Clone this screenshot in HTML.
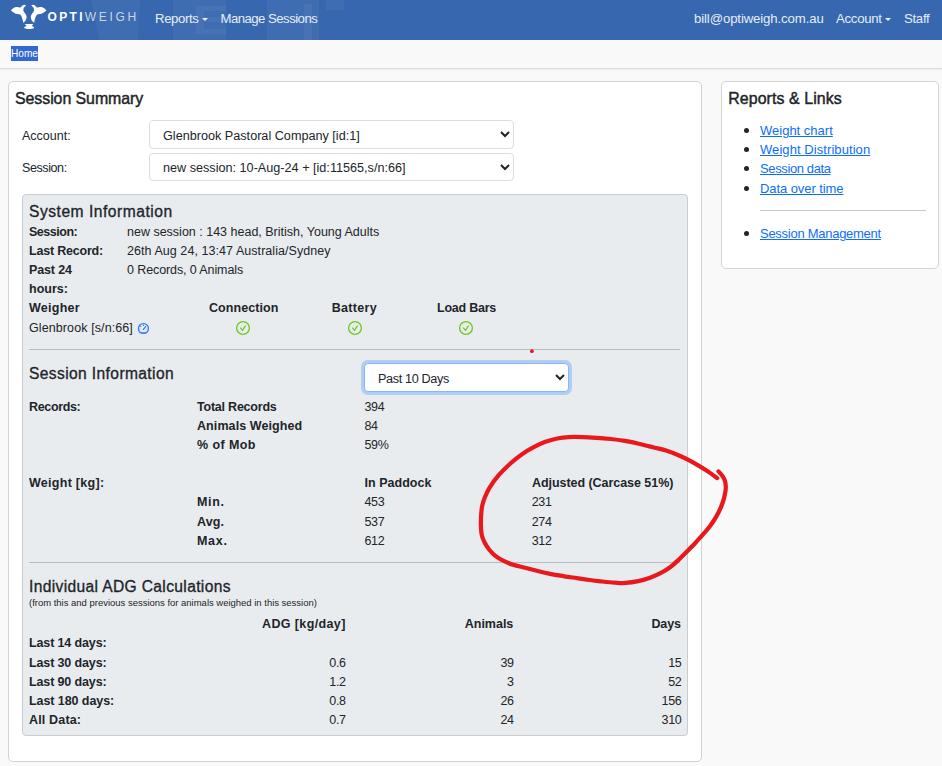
<!DOCTYPE html>
<html lang="en">
<head>
<meta charset="utf-8">
<title>Optiweigh - Session Summary</title>
<style>
*{box-sizing:border-box;}
html,body{margin:0;padding:0;}
body{width:942px;height:766px;overflow:hidden;background:#f9f9f9;font-family:"Liberation Sans",sans-serif;font-size:12.5px;line-height:19.2px;color:#212529;position:relative;}
b,.b{font-weight:bold;letter-spacing:-0.3px;}
a{color:#0d6efd;text-decoration:underline;}
/* navbar */
.nav{position:absolute;left:0;top:0;width:942px;height:40px;background:#3767ae;color:#e6edf6;font-size:13.200px;}
.nav .it{position:absolute;top:0;line-height:37px;white-space:nowrap;letter-spacing:-0.37px;}
.caret{display:inline-block;width:0;height:0;border-left:3px solid transparent;border-right:3px solid transparent;border-top:3px solid #e9eff7;vertical-align:middle;margin-left:3px;position:relative;top:0px;}
.logo{position:absolute;left:0;top:0;}
/* crumb */
.crumb{position:absolute;left:0;top:40px;width:942px;height:29px;background:#f9f9f9;border-bottom:1px solid #dcdddf;box-shadow:0 1px 2px rgba(0,0,0,.06);}
.crumb .sel{position:absolute;left:11px;top:6px;height:15px;line-height:15px;background:#3367d1;color:#fff;font-size:10.1px;padding:0;}
/* cards */
.card{position:absolute;background:#fff;border:1px solid #d3d3d3;border-radius:5px;}
.left{left:8px;top:81px;width:694px;height:681px;}
.right{left:721px;top:81px;width:218px;height:188px;}
h5{margin:0;font-size:15.900px;font-weight:normal;-webkit-text-stroke:0.450px #212529;letter-spacing:-0.050px;line-height:20px;position:absolute;white-space:nowrap;color:#212529;}
.lbl{position:absolute;white-space:nowrap;}
.sel-box{position:absolute;height:29px;border:1px solid #dadee3;border-radius:4px;background:#fff;padding-left:13px;line-height:27px;padding-top:1.500px;font-size:12.650px;white-space:nowrap;}
.sel-box svg{position:absolute;right:2px;top:7px;}
.panel{position:absolute;left:13px;top:112px;width:666px;height:542px;background:#e9ecef;border:1px solid #c9ccd0;border-radius:4px;}
.panel h6{margin:0;font-size:15.600px;-webkit-text-stroke:0.320px #212529;letter-spacing:0.520px;font-weight:normal;line-height:19px;position:absolute;left:6px;white-space:nowrap;color:#212529;}
.t{position:absolute;white-space:nowrap;line-height:19px;margin-top:0.700px;}
.r{text-align:right;}
.n{letter-spacing:-0.35px;}
.n.r{margin-right:-0.35px;}
.hr{position:absolute;left:6px;width:651px;height:1px;background:#b9bcc0;}
.ico{position:absolute;}
ul{margin:0;padding:0;list-style:none;}
.right li{position:absolute;left:38px;white-space:nowrap;line-height:19px;font-size:13px;}
.right li:before{content:"";position:absolute;left:-16px;top:7px;width:5px;height:5px;border-radius:50%;background:#212529;}
.anno{position:absolute;left:0;top:0;pointer-events:none;}
</style>
</head>
<body>
<div class="nav">
  <svg style="position:absolute;left:0;top:0" width="942" height="40" viewBox="0 0 942 40"><g fill="#fff" fill-opacity="0.045"><path d="M91 0 H140 L138 40 H99 Z"/><rect x="173" y="0" width="53" height="40"/><path d="M196 6 H226 V11 H204 V17 H226 V22 H204 V29 H226 V34 H196 Z"/><rect x="267" y="0" width="52" height="40"/><rect x="326" y="0" width="18" height="10"/><rect x="304" y="4" width="8" height="36"/></g></svg>
  <svg class="logo" width="150" height="40" viewBox="0 0 150 40">
    <g fill="#fff">
      <path d="M11 10.200 C12.500 8.300 14.500 7.100 16.500 7 C18.300 6.900 19.600 7.900 20.500 7.500 C21.300 6.200 22.400 5.200 23.700 4.900 C24.800 4.700 25.800 5 26.100 5.600 C24.800 6.400 23.900 7.500 23.500 8.800 C23.100 10 23.400 11.200 24.200 12.200 C25.100 13.300 26 14.300 26.400 15.800 C26.800 17.300 26.500 19 25.600 20.400 C25 21.300 24.200 22.100 23.200 22.700 C23.100 21.400 22.800 20.200 22.400 19 C22 17.800 21.900 16.700 21.200 15.700 C20.700 15 20.200 14.500 19.400 14.300 C18.200 14 17 14.100 15.800 13.700 C14.600 13.300 13.500 12.600 12.500 11.800 C11.900 11.300 11.400 10.800 11 10.200 Z"/>
      <path d="M11 10.200 C12.500 8.300 14.500 7.100 16.500 7 C18.300 6.900 19.600 7.900 20.500 7.500 C21.300 6.200 22.400 5.200 23.700 4.900 C24.800 4.700 25.800 5 26.100 5.600 C24.800 6.400 23.900 7.500 23.500 8.800 C23.100 10 23.400 11.200 24.200 12.200 C25.100 13.300 26 14.300 26.400 15.800 C26.800 17.300 26.500 19 25.600 20.400 C25 21.300 24.200 22.100 23.200 22.700 C23.100 21.400 22.800 20.200 22.400 19 C22 17.800 21.900 16.700 21.200 15.700 C20.700 15 20.200 14.500 19.400 14.300 C18.200 14 17 14.100 15.800 13.700 C14.600 13.300 13.500 12.600 12.500 11.800 C11.900 11.300 11.400 10.800 11 10.200 Z" transform="translate(57.400,0) scale(-1,1)"/>
      <path d="M24.700 24 H33.400 C32.900 24.800 32.300 25.300 31.600 25.800 C32.500 26.300 33.600 26.900 34.300 27.700 C33.200 28.700 31 29.100 29.100 29.100 C27.200 29.100 25.200 28.700 24 27.700 C24.700 26.900 25.800 26.300 26.700 25.800 C26 25.300 25.300 24.800 24.700 24 Z"/>
    </g>
    <text y="21.100" font-family="Liberation Sans, sans-serif" font-size="12" fill="#fff"><tspan x="47.600" font-weight="bold" letter-spacing="2.300">OPTI</tspan><tspan x="84.800" fill="#fff" fill-opacity="0.720" letter-spacing="2.700">WEIGH</tspan></text>
  </svg>
  <span class="it" style="left:155px">Reports<span class="caret"></span></span>
  <span class="it" style="left:220.500px;letter-spacing:-0.540px">Manage Sessions</span>
  <span class="it" style="left:694px;letter-spacing:-0.120px">bill@optiweigh.com.au</span>
  <span class="it" style="left:836px;letter-spacing:-0.270px">Account<span class="caret"></span></span>
  <span class="it" style="left:904px;letter-spacing:-0.300px">Staff</span>
</div>
<div class="crumb"><span class="sel">Home</span></div>

<div class="card left">
  <h5 style="left:6px;top:7px">Session Summary</h5>
  <span class="lbl" style="left:13px;top:45px">Account:</span>
  <div class="sel-box" style="left:140px;top:38px;width:365px">Glenbrook Pastoral Company [id:1]<svg width="12" height="12" viewBox="0 0 12 12"><path d="M2 4 L6 8 L10 4" fill="none" stroke="#222" stroke-width="2"/></svg></div>
  <span class="lbl" style="left:13px;top:77px;letter-spacing:-0.400px">Session:</span>
  <div class="sel-box" style="left:140px;top:71px;width:365px;height:28px;line-height:26px;padding-top:1px">new session: 10-Aug-24 + [id:11565,s/n:66]<svg width="12" height="12" viewBox="0 0 12 12"><path d="M2 4 L6 8 L10 4" fill="none" stroke="#222" stroke-width="2"/></svg></div>

  <div class="panel">
    <h6 style="top:7px">System Information</h6>
    <span class="t b" style="left:6px;top:27px;letter-spacing:-0.48px">Session:</span>
    <span class="t" style="left:104px;top:27px">new session : 143 head, British, Young Adults</span>
    <span class="t b" style="left:6px;top:46px;letter-spacing:-0.2px">Last Record:</span>
    <span class="t" style="left:104px;top:46px;letter-spacing:0.060px">26th Aug 24, 13:47 Australia/Sydney</span>
    <span class="t b" style="left:6px;top:65px;letter-spacing:-0.14px">Past 24</span>
    <span class="t b" style="left:6px;top:84px;letter-spacing:-0.01px">hours:</span>
    <span class="t" style="left:104px;top:65px;letter-spacing:-0.100px">0 Records, 0 Animals</span>
    <span class="t b" style="left:6px;top:103px;letter-spacing:0.26px">Weigher</span>
    <span class="t b" style="left:186px;top:103px;letter-spacing:0.06px">Connection</span>
    <span class="t b" style="left:308.700px;top:103px;letter-spacing:0.32px">Battery</span>
    <span class="t b" style="left:414px;top:103px;letter-spacing:-0.23px">Load Bars</span>
    <span class="t" style="left:6px;top:123px;letter-spacing:0.100px">Glenbrook [s/n:66]</span>
    <svg class="ico" style="left:113px;top:127px" width="15" height="14" viewBox="0 0 15 14"><defs><clipPath id="gc1"><circle cx="7.450" cy="6.550" r="5.600"/></clipPath><clipPath id="gc0"><rect x="0" y="0" width="15" height="11.850"/></clipPath></defs><circle cx="7.450" cy="6.550" r="5" fill="none" stroke="#2f7bf5" stroke-width="1.250" clip-path="url(#gc0)"/><g clip-path="url(#gc1)"><rect x="0" y="10" width="15" height="1.850" fill="#2f7bf5" fill-opacity="0.750"/></g><path d="M7.450 7.400 L9.600 4.600" stroke="#2f7bf5" stroke-width="1.250" fill="none" stroke-linecap="round"/><path d="M7.450 2.700 V4" stroke="#2f7bf5" stroke-width="1" fill="none"/><path d="M3.700 3.900 L5.400 4.600" stroke="#2f7bf5" stroke-width="0.900" fill="none"/><path d="M3.600 7 H4.500 M10.400 6.800 H11.300" stroke="#2f7bf5" stroke-width="0.900" stroke-opacity="0.450" fill="none"/></svg>
    <svg class="ico" style="left:212px;top:125px" width="16" height="16" viewBox="0 0 16 16"><circle cx="8" cy="8" r="6.400" fill="none" stroke="#6bca1f" stroke-width="1.350"/><path d="M5.100 7.700 L7.500 10.300 L10.600 5.600" fill="none" stroke="#6bca1f" stroke-width="1.250"/></svg>
    <svg class="ico" style="left:324px;top:125px" width="16" height="16" viewBox="0 0 16 16"><circle cx="8" cy="8" r="6.400" fill="none" stroke="#6bca1f" stroke-width="1.350"/><path d="M5.100 7.700 L7.500 10.300 L10.600 5.600" fill="none" stroke="#6bca1f" stroke-width="1.250"/></svg>
    <svg class="ico" style="left:435px;top:125px" width="16" height="16" viewBox="0 0 16 16"><circle cx="8" cy="8" r="6.400" fill="none" stroke="#6bca1f" stroke-width="1.350"/><path d="M5.100 7.700 L7.500 10.300 L10.600 5.600" fill="none" stroke="#6bca1f" stroke-width="1.250"/></svg>
    <div class="hr" style="top:154px"></div>

    <h6 style="top:169px;letter-spacing:0.380px">Session Information</h6>
    <div class="sel-box" style="left:341px;top:168px;width:205px;height:29px;border-color:#86b7fe;box-shadow:0 0 0 3px rgba(13,110,253,.25);letter-spacing:-0.350px">Past 10 Days<svg width="12" height="12" viewBox="0 0 12 12"><path d="M2 4 L6 8 L10 4" fill="none" stroke="#222" stroke-width="2"/></svg></div>
    <span class="t b" style="left:6px;top:202px;letter-spacing:-0.35px">Records:</span>
    <span class="t b" style="left:174px;top:202px;letter-spacing:-0.22px">Total Records</span>
    <span class="t n" style="left:341.500px;top:202px">394</span>
    <span class="t b" style="left:174px;top:221px;letter-spacing:0.09px">Animals Weighed</span>
    <span class="t n" style="left:341.500px;top:221px">84</span>
    <span class="t b" style="left:174px;top:240px;letter-spacing:0.41px">% of Mob</span>
    <span class="t n" style="left:341.500px;top:240px">59%</span>

    <span class="t b" style="left:6px;top:278px;letter-spacing:0.28px">Weight [kg]:</span>
    <span class="t b" style="left:341.500px;top:278px;letter-spacing:0.02px">In Paddock</span>
    <span class="t b" style="left:509px;top:278px;letter-spacing:-0.05px">Adjusted (Carcase 51%)</span>
    <span class="t b" style="left:174px;top:297px;letter-spacing:0.7px">Min.</span>
    <span class="t n" style="left:341.500px;top:297px">453</span>
    <span class="t n" style="left:508.700px;top:297px">231</span>
    <span class="t b" style="left:174px;top:317px;letter-spacing:0.11px">Avg.</span>
    <span class="t n" style="left:341.500px;top:317px">537</span>
    <span class="t n" style="left:508.700px;top:317px">274</span>
    <span class="t b" style="left:174px;top:336px;letter-spacing:0.7px">Max.</span>
    <span class="t n" style="left:341.500px;top:336px">612</span>
    <span class="t n" style="left:508.700px;top:336px">312</span>
    <div class="hr" style="top:367px"></div>

    <h6 style="top:382px;letter-spacing:0.350px">Individual ADG Calculations</h6>
    <span class="t" style="left:6px;top:400px;font-size:9.480px;line-height:14px">(from this and previous sessions for animals weighed in this session)</span>
    <span class="t b r" style="right:341.700px;top:419px;letter-spacing:0.37px;margin-right:-0.37px">ADG [kg/day]</span>
    <span class="t b r" style="right:173.700px;top:419px;letter-spacing:-0.01px;margin-right:0.01px">Animals</span>
    <span class="t b r" style="right:6px;top:419px;letter-spacing:-0.11px;margin-right:0.11px">Days</span>
    <span class="t b" style="left:6px;top:438px;letter-spacing:-0.13px">Last 14 days:</span>
    <span class="t b" style="left:6px;top:458px;letter-spacing:-0.13px">Last 30 days:</span>
    <span class="t r n" style="right:341.700px;top:458px">0.6</span>
    <span class="t r n" style="right:173.700px;top:458px">39</span>
    <span class="t r n" style="right:6px;top:458px">15</span>
    <span class="t b" style="left:6px;top:477px;letter-spacing:-0.13px">Last 90 days:</span>
    <span class="t r n" style="right:341.700px;top:477px">1.2</span>
    <span class="t r n" style="right:173.700px;top:477px">3</span>
    <span class="t r n" style="right:6px;top:477px">52</span>
    <span class="t b" style="left:6px;top:496px;letter-spacing:-0.07px">Last 180 days:</span>
    <span class="t r n" style="right:341.700px;top:496px">0.8</span>
    <span class="t r n" style="right:173.700px;top:496px">26</span>
    <span class="t r n" style="right:6px;top:496px">156</span>
    <span class="t b" style="left:6px;top:515px;letter-spacing:0.16px">All Data:</span>
    <span class="t r n" style="right:341.700px;top:515px">0.7</span>
    <span class="t r n" style="right:173.700px;top:515px">24</span>
    <span class="t r n" style="right:6px;top:515px">310</span>
  </div>
</div>

<div class="card right">
  <h5 style="left:6.200px;top:7px;letter-spacing:0.100px">Reports &amp; Links</h5>
  <ul>
    <li style="top:39px"><a>Weight chart</a></li>
    <li style="top:58px;letter-spacing:0.070px"><a>Weight Distribution</a></li>
    <li style="top:77px;letter-spacing:-0.380px"><a>Session data</a></li>
    <li style="top:97px;letter-spacing:-0.080px"><a>Data over time</a></li>
    <li style="top:142px;letter-spacing:-0.270px"><a>Session Management</a></li>
  </ul>
  <div style="position:absolute;left:38px;top:128px;width:166px;height:1px;background:#c8c8c8"></div>
</div>

<svg class="anno" width="942" height="766" viewBox="0 0 942 766">
  <path d="M718.5 471.4 C719.6 472.6 721.4 474.4 722.5 476.1 C723.7 478.0 724.5 479.0 725.0 481.0 C725.5 483.0 725.9 485.2 725.8 488.0 C725.7 490.8 725.0 494.3 724.2 497.5 C723.4 500.7 722.3 503.9 721.0 507.1 C719.7 510.3 718.1 513.4 716.2 516.6 C714.4 519.8 712.3 523.0 709.9 526.2 C707.5 529.4 704.6 532.7 701.9 535.7 C699.2 538.8 696.5 541.7 693.9 544.5 C691.2 547.3 688.6 549.9 686.0 552.5 C683.4 555.1 680.6 557.9 678.0 560.4 C675.4 562.9 673.0 565.2 670.1 567.3 C667.2 569.4 664.0 571.4 660.5 573.2 C657.0 575.0 653.1 576.6 649.4 577.9 C645.7 579.2 642.2 580.3 638.2 581.1 C634.2 581.9 629.4 582.6 625.5 582.9 C621.6 583.2 619.0 582.9 615.1 582.7 C611.2 582.5 606.6 582.0 602.4 581.5 C598.1 581.0 593.9 580.6 589.6 580.0 C585.4 579.4 581.1 578.7 576.9 578.1 C572.7 577.5 568.5 577.0 564.2 576.3 C560.0 575.6 555.6 575.0 551.4 574.1 C547.1 573.2 542.9 572.2 538.7 571.2 C534.5 570.2 530.2 569.1 526.0 568.0 C521.8 566.9 516.9 566.0 513.2 564.8 C509.5 563.6 506.6 562.3 503.7 560.9 C500.8 559.5 498.1 558.0 495.7 556.1 C493.3 554.2 491.1 552.0 489.3 549.7 C487.5 547.4 485.9 545.0 484.6 542.5 C483.3 540.0 482.3 537.5 481.7 534.6 C481.1 531.7 481.0 528.2 480.9 525.0 C480.8 521.8 480.9 518.7 481.1 515.5 C481.3 512.3 481.6 508.8 482.2 505.9 C482.8 503.0 483.4 501.0 484.6 498.0 C485.8 495.0 487.0 491.9 489.3 488.1 C491.6 484.3 495.2 479.3 498.7 475.2 C502.2 471.1 506.5 467.0 510.4 463.5 C514.3 460.0 518.1 456.9 522.0 454.2 C525.9 451.5 529.8 449.3 533.7 447.2 C537.6 445.1 541.5 443.2 545.4 441.8 C549.3 440.4 553.2 439.3 557.1 438.5 C561.0 437.7 564.4 437.3 568.7 437.1 C573.0 436.9 578.1 437.0 582.8 437.1 C587.5 437.2 592.1 437.5 596.8 437.8 C601.5 438.1 606.1 438.5 610.8 439.0 C615.5 439.5 620.1 440.1 624.8 440.9 C629.5 441.7 634.1 442.6 638.8 443.7 C643.5 444.8 648.1 446.0 652.8 447.2 C657.5 448.4 662.1 449.2 666.8 450.7 C671.5 452.2 676.4 454.2 680.8 456.2 C685.2 458.1 688.8 460.0 693.0 462.4 C697.2 464.8 702.1 467.7 706.1 470.3 C710.1 472.9 715.4 476.8 717.2 478.1" fill="none" stroke="#e8191d" stroke-width="4.250" stroke-linecap="round" stroke-linejoin="round"/>
  <circle cx="531.900" cy="351.200" r="1.900" fill="#e8191d"/>
</svg>
</body>
</html>
